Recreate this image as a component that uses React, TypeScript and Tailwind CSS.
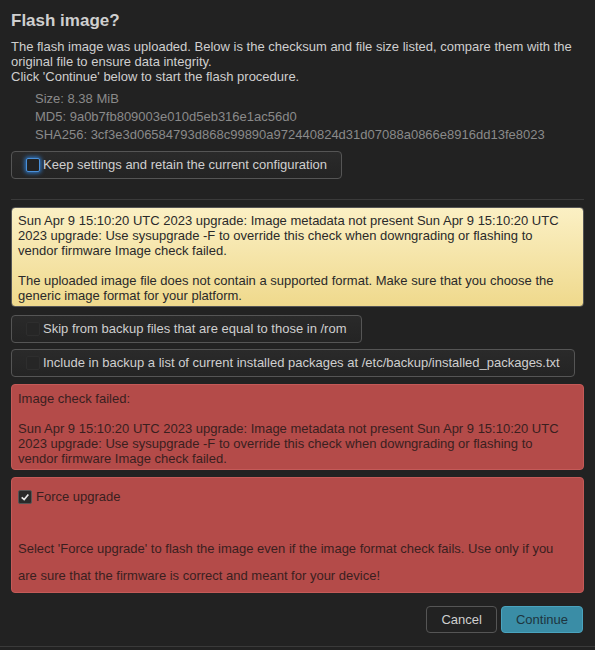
const font = { fontFamily: '"Liberation Sans", Arial, sans-serif' }

function Box({ children, checked }: { children: React.ReactNode; checked?: boolean }) {
  return (
    <label className="flex h-[28px] w-fit items-center rounded-[4px] border border-[#555] bg-gradient-to-b from-[#2a2a2a] to-[#242424] pl-[14px] pr-[14px] text-[13px] text-[#cfcfcf]">
      <span
        className={
          checked
            ? 'mr-[3px] h-[14px] w-[14px] rounded-[2px] border border-[#4a90d9] bg-[#222] shadow-[0_0_4px_1px_#2f7dd1]'
            : 'mr-[3px] h-[14px] w-[14px] rounded-[2px] border border-[#2e2e2e] bg-[#262626]'
        }
      />
      {children}
    </label>
  )
}

export default function App() {
  return (
    <div style={font} className="h-[650px] w-[595px] overflow-hidden bg-[#222222]">
      <div className="h-[647px] border-b border-[#3a3a3a] px-[11px] pt-[10px]">
        <h3 className="text-[17px] font-bold leading-[22px] text-[#cfcfcf]">Flash image?</h3>
        <p className="mt-[7px] text-[13px] leading-[15px] text-[#cfcfcf]">
          The flash image was uploaded. Below is the checksum and file size listed, compare them with the original file to ensure data integrity.
          <br />
          Click 'Continue' below to start the flash procedure.
        </p>
        <ul className="mt-[6px] pl-[24px] text-[13px] leading-[18px] text-[#8a8a8a]">
          <li>Size: 8.38 MiB</li>
          <li>MD5: 9a0b7fb809003e010d5eb316e1ac56d0</li>
          <li>SHA256: 3cf3e3d06584793d868c99890a972440824d31d07088a0866e8916dd13fe8023</li>
        </ul>
        <div className="mt-[7px]">
          <Box checked>Keep settings and retain the current configuration</Box>
        </div>
        <hr className="mt-[20px] border-[#3a3a3a]" />
        <div className="mt-[7px] rounded-[4px] border border-[#555] bg-gradient-to-b from-[#fbf0c4] to-[#efd98c] pb-[3px] pl-[6px] pr-[14px] pt-[5px] text-[13px] leading-[15px] text-[#2a2a2a]">
          Sun Apr 9 15:10:20 UTC 2023 upgrade: Image metadata not present Sun Apr 9 15:10:20 UTC 2023 upgrade: Use sysupgrade -F to override this check when downgrading or flashing to vendor firmware Image check failed.
          <br />
          <br />
          The uploaded image file does not contain a supported format. Make sure that you choose the generic image format for your platform.
        </div>
        <div className="mt-[8px] flex flex-col gap-[6px]">
          <Box>Skip from backup files that are equal to those in /rom</Box>
          <Box>Include in backup a list of current installed packages at /etc/backup/installed_packages.txt</Box>
        </div>
        <div className="mt-[7px] rounded-[4px] border border-[#c45a58] bg-[#b44b49] pb-[3px] pl-[6px] pr-[14px] pt-[6px] text-[13px] leading-[15px] text-[#3a1f1f]">
          Image check failed:
          <br />
          <br />
          Sun Apr 9 15:10:20 UTC 2023 upgrade: Image metadata not present Sun Apr 9 15:10:20 UTC 2023 upgrade: Use sysupgrade -F to override this check when downgrading or flashing to vendor firmware Image check failed.
        </div>
        <div className="mt-[7px] h-[116px] rounded-[4px] border border-[#c45a58] bg-[#b44b49] pl-[6px] pr-[14px] pt-[11px] text-[13px] text-[#3a1f1f]">
          <label className="flex items-center leading-[16px]">
            <span className="mr-[4px] flex h-[14px] w-[14px] items-center justify-center rounded-[2px] border border-[#555] bg-[#2a2a2a]">
              <svg viewBox="0 0 12 12" className="h-[10px] w-[10px]">
                <path d="M2 6.5 L5 9 L10 3" fill="none" stroke="#e8e8e8" strokeWidth="2" />
              </svg>
            </span>
            Force upgrade
          </label>
          <p className="mt-[30px] leading-[27px]">
            Select 'Force upgrade' to flash the image even if the image format check fails. Use only if you are sure that the firmware is correct and meant for your device!
          </p>
        </div>
        <div className="mt-[13px] flex justify-end gap-[4px] pr-[1px]">
          <button className="h-[27px] rounded-[4px] border border-[#555] bg-[#222] px-[14px] text-[13px] text-[#cfcfcf]">Cancel</button>
          <button className="h-[27px] rounded-[4px] border border-[#4aa3be] bg-[#3a8da6] px-[14px] text-[13px] text-[#1e3540]">Continue</button>
        </div>
      </div>
    </div>
  )
}
